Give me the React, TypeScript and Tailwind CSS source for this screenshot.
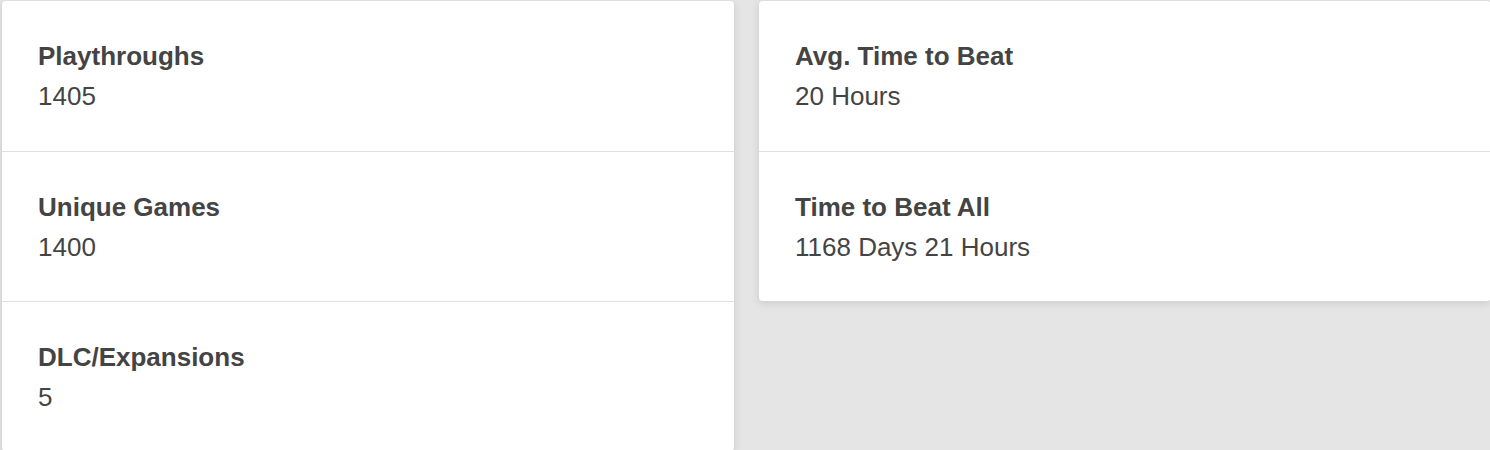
import React from 'react';

type Stat = { label: string; value: string };

const leftStats: Stat[] = [
    { label: 'Playthroughs', value: '1405' },
    { label: 'Unique Games', value: '1400' },
    { label: 'DLC/Expansions', value: '5' },
];

const rightStats: Stat[] = [
    { label: 'Avg. Time to Beat', value: '20 Hours' },
    { label: 'Time to Beat All', value: '1168 Days 21 Hours' },
];

const StatCard: React.FC<{ stats: Stat[] }> = ({ stats }) => (
    <div className="bg-white rounded-[4px] shadow-[0_2px_8px_rgba(0,0,0,0.12)] self-start">
        {stats.map((s, i) => (
            <div
                key={s.label}
                className={`h-[150px] flex flex-col justify-center pl-[36px] ${i > 0 ? 'border-t border-[#e0e0e0]' : ''}`}
            >
                <div className="text-[26px] leading-[40px] font-bold text-[#444]">{s.label}</div>
                <div className="text-[26px] leading-[40px] text-[#444]">{s.value}</div>
            </div>
        ))}
    </div>
);

export default function App() {
    return (
        <div className="w-[1490px] h-[450px] overflow-hidden bg-[#e5e5e5] pl-[2px] pt-[1px] font-['Liberation_Sans',Arial,sans-serif]">
            <div className="grid grid-cols-[732px_732px] gap-[25px]">
                <StatCard stats={leftStats} />
                <StatCard stats={rightStats} />
            </div>
        </div>
    );
}
